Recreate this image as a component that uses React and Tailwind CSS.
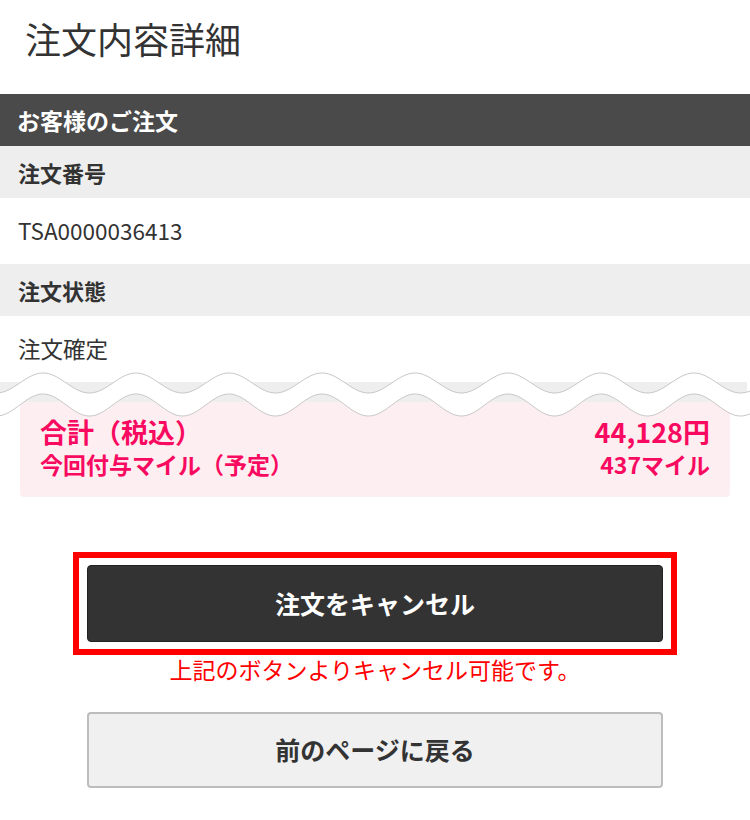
import React from 'react'

const FONT = { fontFamily: '"Noto Sans CJK JP", "Noto Sans", sans-serif' }

// wavy tear edge drawn across the page
function waveD(base, amp, from, to) {
  const pts = []
  for (let x = from; x <= to; x += 2) {
    const t = (2 * Math.PI * (x - 43)) / 93
    pts.push([x, base - amp * Math.cos(t)])
  }
  return pts
}

function TearEdge() {
  const top = waveD(12, 10, 0, 750)
  const bottom = waveD(34, 11, 0, 750)
  const line = (pts) => pts.map((p, i) => `${i ? 'L' : 'M'}${p[0]} ${p[1].toFixed(2)}`).join(' ')
  const band =
    line(top) +
    ' ' +
    bottom
      .slice()
      .reverse()
      .map((p) => `L${p[0]} ${p[1].toFixed(2)}`)
      .join(' ') +
    ' Z'
  return (
    <svg className="absolute left-0 top-[-11px] pointer-events-none" width="750" height="48" viewBox="0 0 750 48">
      <path d={band} fill="#fff" />
      <path d={line(top)} fill="none" stroke="#c9c9c9" strokeWidth="1" />
      <path d={line(bottom)} fill="none" stroke="#c9c9c9" strokeWidth="1" />
    </svg>
  )
}

function Row({ label, value }) {
  return (
    <>
      <div className="h-[52px] bg-[#eeeeee] flex items-center pl-[18px] text-[22px] font-bold text-[#333]">{label}</div>
      <div className="h-[66px] flex items-center pl-[18px] text-[22.5px] text-[#333]">{value}</div>
    </>
  )
}

export default function App() {
  return (
    <div className="w-[750px] min-h-[820px] bg-white overflow-hidden" style={FONT}>
      <div className="h-[94px] pl-[25px] pt-[16px]">
        <h1 className="text-[36px] leading-[44px] font-normal text-[#333]">注文内容詳細</h1>
      </div>

      <div className="h-[52px] bg-[#4a4a4a] flex items-center pl-[17px] text-[23px] font-bold text-white">
        お客様のご注文
      </div>
      <Row label="注文番号" value="TSA0000036413" />
      <Row label="注文状態" value="注文確定" />

      <div className="relative">
        <div className="h-[20px] bg-[#eeeeee] mr-[3px]" />
        <div className="mx-[20px] bg-[#fdeff1] rounded-b-[4px] pt-[13px] pb-[18px] px-[20px] text-[#f80a60] font-bold">
          <div className="flex justify-between items-center text-[27px] leading-[34px]">
            <span>合計（税込）</span>
            <span>44,128円</span>
          </div>
          <div className="flex justify-between items-center text-[23px] leading-[30px]">
            <span>今回付与マイル（予定）</span>
            <span>437マイル</span>
          </div>
        </div>
        <TearEdge />
      </div>

      <div className="mt-[55px] mx-auto w-[604px] border-[6px] border-[#ff0000] px-[8px] py-[7px]">
        <button className="w-full h-[77px] bg-[#333333] border border-[#222] rounded-[4px] text-white text-[25px] font-bold">
          注文をキャンセル
        </button>
      </div>
      <p className="text-center text-[#ff0000] text-[23px] leading-[28px]">上記のボタンよりキャンセル可能です。</p>

      <div className="mt-[29px] flex justify-center">
        <button className="w-[576px] h-[76px] bg-[#f0f0f0] border-2 border-[#bdbdbd] rounded-[4px] text-[#333] text-[25px] font-bold">
          前のページに戻る
        </button>
      </div>
    </div>
  )
}
